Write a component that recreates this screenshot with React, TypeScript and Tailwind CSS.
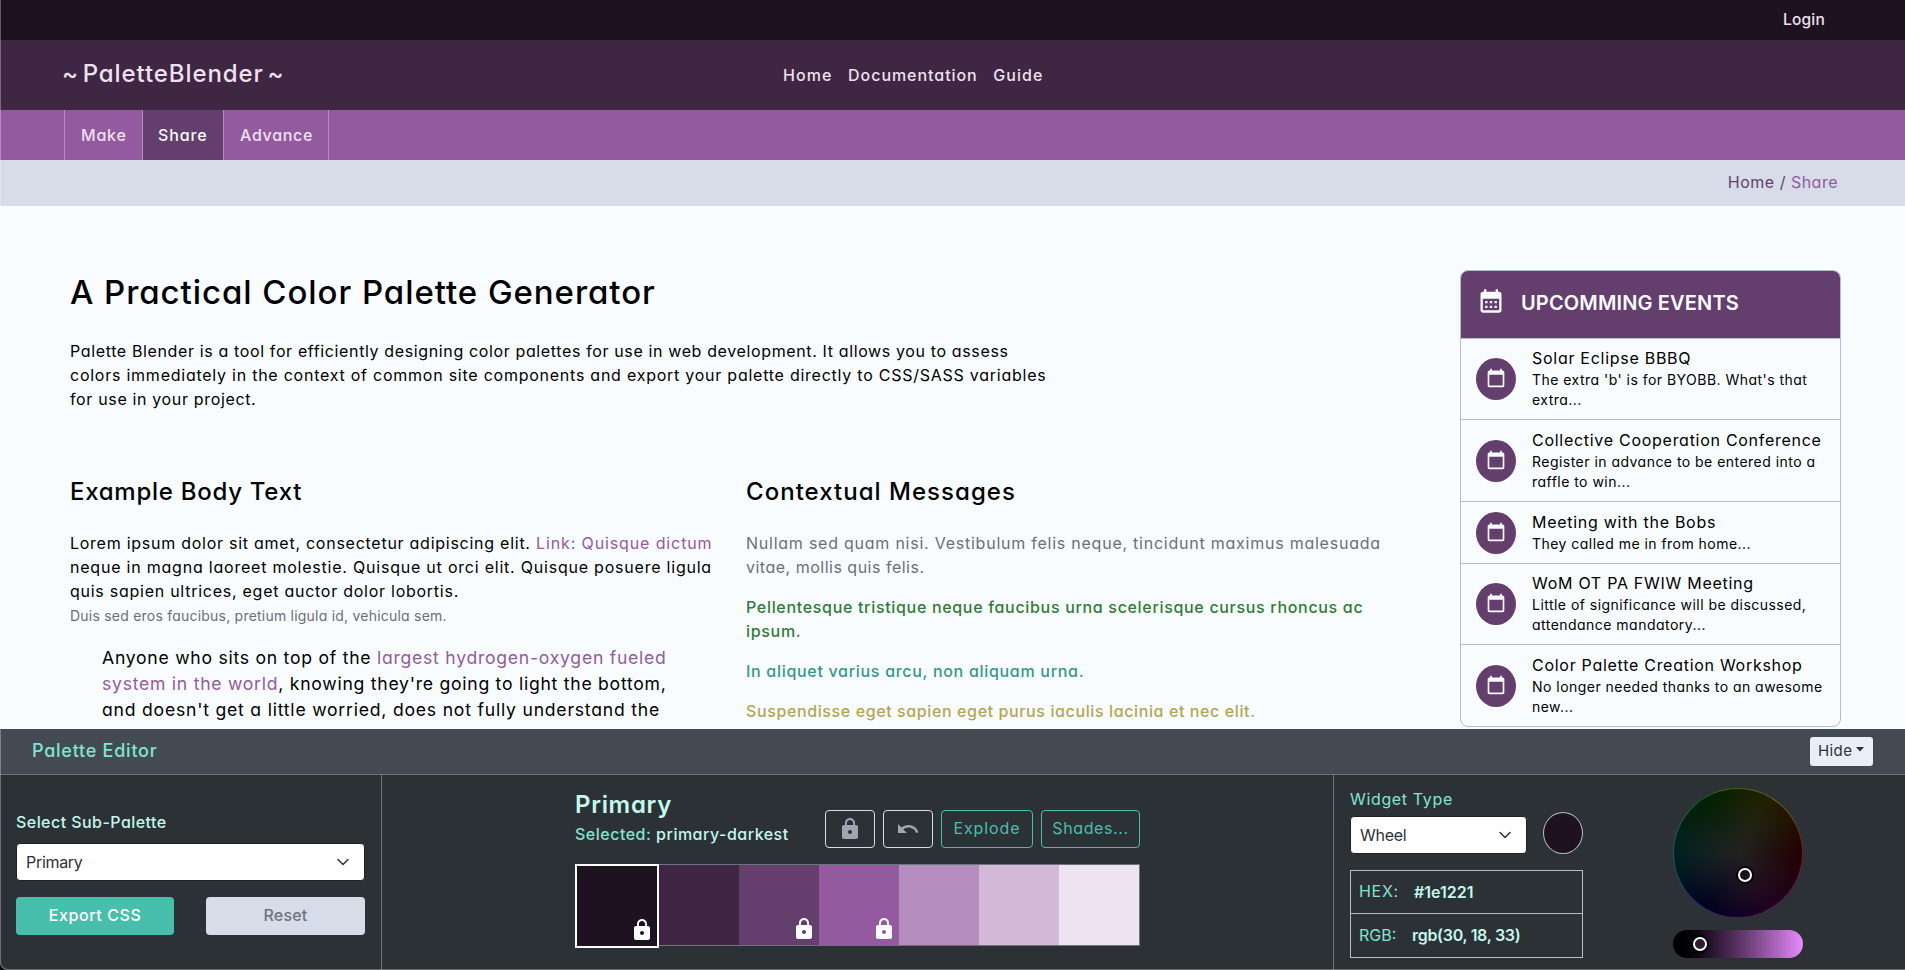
import React from "react";
import { MdCalendarMonth, MdCalendarToday, MdLock, MdUndo } from "react-icons/md";

type Event = { title: string; lines: string[]; height: string };

const events: Event[] = [
  { title: "Solar Eclipse BBBQ", lines: ["The extra 'b' is for BYOBB. What's that", "extra..."], height: "h-[81px]" },
  { title: "Collective Cooperation Conference", lines: ["Register in advance to be entered into a", "raffle to win..."], height: "h-[82px]" },
  { title: "Meeting with the Bobs", lines: ["They called me in from home..."], height: "h-[62px]" },
  { title: "WoM OT PA FWIW Meeting", lines: ["Little of significance will be discussed,", "attendance mandatory..."], height: "h-[81px]" },
  { title: "Color Palette Creation Workshop", lines: ["No longer needed thanks to an awesome", "new..."], height: "h-[81px]" },
];

const swatches = [
  { color: "bg-[#3f2642]", locked: false },
  { color: "bg-[#643e6d]", locked: true },
  { color: "bg-[#935a9f]", locked: true },
  { color: "bg-[#b58dbf]", locked: false },
  { color: "bg-[#d3b9d8]", locked: false },
  { color: "bg-[#eee3f0]", locked: false },
];

function Chevron() {
  return (
    <svg width="16" height="16" viewBox="0 0 16 16" fill="none" stroke="#343a40" strokeWidth="1.6" strokeLinecap="round" strokeLinejoin="round">
      <path d="m3 5.5 5 5 5-5" />
    </svg>
  );
}

function Select({ value, className }: { value: string; className: string }) {
  return (
    <button className={`flex h-[38px] items-center justify-between rounded border border-[#1d2124] bg-white pr-[13px] pl-[9px] text-[16px] tracking-[-0.3px] text-[#2c3135] [font-feature-settings:normal] ${className}`}>
      {value}
      <Chevron />
    </button>
  );
}

function Handle({ className, fill }: { className: string; fill: string }) {
  return (
    <svg className={`absolute size-[18px] ${className}`} viewBox="0 0 18 18">
      <circle cx="9" cy="9" r="9" fill="#000" />
      <circle cx="9" cy="9" r="6" fill={fill} stroke="#fff" strokeWidth="2" />
    </svg>
  );
}

function SiteHeader() {
  return (
    <header>
      <div className="flex h-10 items-center justify-end bg-[#1e1221] pr-[80px] text-[15.5px] font-medium tracking-[0.2px] text-[#eee1f0]">
        <a>Login</a>
      </div>
      <div className="flex h-[70px] items-center bg-[#3f2642] text-[#eee1f0]">
        <div className="w-[783px] pb-0.5 pl-[62px] text-[24px] leading-8 font-medium tracking-[0.9px] [word-spacing:-3.5px]">~ PaletteBlender ~</div>
        <nav className="flex gap-[15.5px] font-medium">
          <a className="tracking-[1.1px]">Home</a>
          <a className="tracking-[0.95px]">Documentation</a>
          <a className="tracking-[1.1px]">Guide</a>
        </nav>
      </div>
      <nav className="flex h-[50px] bg-[#935a9f] pl-[64px] font-medium text-[#eee1f0]">
        <a className="flex w-[78px] items-center border-l border-[#b58dbf] pl-4 tracking-[0.8px]">Make</a>
        <a className="flex w-[81px] items-center border-l border-[#b58dbf] bg-[#643e6d] pl-[15px] tracking-[0.9px] text-[#f9fcff]">Share</a>
        <a className="flex w-[106px] items-center border-x border-[#b58dbf] pl-4 tracking-[0.7px]">Advance</a>
      </nav>
      <div className="flex h-[46px] items-center justify-end bg-[#d6dce8] pr-[67px] pb-0.5 tracking-[0.5px] whitespace-pre text-[#643e6d]">
        Home / <span className="text-[#935a9f]">Share</span>
      </div>
    </header>
  );
}

function Article() {
  return (
    <article className="w-[1460px] shrink-0 pt-[66px] pl-[70px] whitespace-nowrap">
      <h1 className="text-[33px] leading-10 font-medium tracking-[0.94px]">A Practical Color Palette Generator</h1>
      <p className="mt-[27px]">
        <span className="block tracking-[0.63px]">Palette Blender is a tool for efficiently designing color palettes for use in web development. It allows you to assess</span>
        <span className="block tracking-[0.755px]">colors immediately in the context of common site components and export your palette directly to CSS/SASS variables</span>
        <span className="block tracking-[0.65px]">for use in your project.</span>
      </p>
      <div className="mt-[65px] flex">
        <section className="w-[676px]">
          <h2 className="text-[24px] leading-8 font-medium tracking-[0.73px]">Example Body Text</h2>
          <p className="mt-[23px] tracking-[0.78px]">
            <span className="tracking-[0.74px]">Lorem ipsum dolor sit amet, consectetur adipiscing elit.</span>{" "}
            <a className="tracking-[0.88px] text-[#935a9f]">Link: Quisque dictum</a>
            <br />
            neque in magna laoreet molestie. Quisque ut orci elit. Quisque posuere ligula
            <br />
            <span className="tracking-[0.74px]">quis sapien ultrices, eget auctor dolor lobortis.</span>
          </p>
          <p className="mt-px text-[14px] leading-6 tracking-[0.22px] text-[#6c6f76]">Duis sed eros faucibus, pretium ligula id, vehicula sem.</p>
          <blockquote className="mt-[17px] pl-8 text-[17.6px] leading-[26px] tracking-[0.74px]">
            Anyone who sits on top of the <a className="text-[#935a9f]">largest hydrogen-oxygen fueled</a>
            <br />
            <a className="text-[#935a9f]">system in the world</a>, knowing they're going to light the bottom,
            <br />
            <span className="tracking-[0.78px]">and doesn't get a little worried, does not fully understand the</span>
          </blockquote>
        </section>
        <section>
          <h2 className="text-[24px] leading-8 font-medium tracking-[1.03px]">Contextual Messages</h2>
          <div className="mt-[23px] flex flex-col gap-4 font-medium">
            <p className="font-normal tracking-[0.76px] text-[#6c6f76]">
              Nullam sed quam nisi. Vestibulum felis neque, tincidunt maximus malesuada
              <br />
              <span className="tracking-[0.5px]">vitae, mollis quis felis.</span>
            </p>
            <p className="tracking-[0.68px] text-[#327a38]">
              Pellentesque tristique neque faucibus urna scelerisque cursus rhoncus ac
              <br />
              ipsum.
            </p>
            <p className="tracking-[0.7px] text-[#34988a]">In aliquet varius arcu, non aliquam urna.</p>
            <p className="tracking-[0.61px] text-[#b0a84f]">Suspendisse eget sapien eget purus iaculis lacinia et nec elit.</p>
          </div>
        </section>
      </div>
    </article>
  );
}

function Events() {
  return (
    <aside className="mt-16 h-[457px] w-[381px] shrink-0 overflow-hidden rounded-lg border border-[#b3bfcc] whitespace-nowrap">
      <div className="flex h-[68px] items-center border-b border-[#b3bfcc] bg-[#643e6d] pb-[7px] pl-4 text-[#f9fcff]">
        <MdCalendarMonth size={28} />
        <h3 className="ml-[16px] pt-[3px] text-[20px] font-semibold tracking-[0.15px]">UPCOMMING EVENTS</h3>
      </div>
      {events.map((e) => (
        <div key={e.title} className={`flex items-center border-b border-[#b3bfcc] pl-[15px] last:border-b-0 ${e.height}`}>
          <span className="flex h-[42px] w-10 items-center justify-center rounded-[50%] bg-[#643e6d] pb-0.5 text-[#f9fcff]">
            <MdCalendarToday size={20} />
          </span>
          <div className="ml-4 pb-px">
            <div className="leading-[23px] tracking-[0.72px]">{e.title}</div>
            {e.lines.map((line) => (
              <div key={line} className="text-[14px] leading-5 tracking-[0.47px]">{line}</div>
            ))}
          </div>
        </div>
      ))}
    </aside>
  );
}

function SubPalettePanel() {
  return (
    <div className="w-[382px] border-r border-[#6c7275] pt-[35px] pl-4">
      <div className="font-medium tracking-[0.45px] text-[#c4f8ec]">Select Sub-Palette</div>
      <Select value="Primary" className="mt-[9px] w-[349px]" />
      <div className="mt-4 flex gap-8 font-medium">
        <button className="h-[38px] w-[158px] rounded bg-[#48bfad] pb-0.5 tracking-[0.6px] text-white">Export CSS</button>
        <button className="h-[38px] w-[159px] rounded bg-[#d6dce8] pb-0.5 tracking-[0.2px] text-[#6c757d]">Reset</button>
      </div>
    </div>
  );
}

function ShadesPanel() {
  return (
    <div className="flex w-[951px] flex-col pl-[193px]">
      <div className="flex h-[73px] w-[565px] items-end justify-between pt-[14px]">
        <div className="self-start whitespace-nowrap text-[#c4f8ec]">
          <h2 className="text-[24px] leading-8 font-semibold tracking-[0.7px]">Primary</h2>
          <div className="mt-px leading-6 font-medium tracking-[0.5px]">
            <span className="text-[#7fe5d1]">Selected:</span> primary-darkest
          </div>
        </div>
        <div className="flex gap-2 text-[#48bfad]">
          <button className="flex h-[38px] w-[50px] items-center justify-center rounded border border-[#d6dce8] text-[#a0a6b1]"><MdLock size={24} /></button>
          <button className="flex h-[38px] w-[50px] items-center justify-center rounded border border-[#d6dce8] text-[#a0a6b1]"><MdUndo size={24} /></button>
          <button className="h-[38px] w-[92px] rounded border border-[#48bfad] pb-0.5 tracking-[0.9px]">Explode</button>
          <button className="h-[38px] w-[99px] rounded border border-[#48bfad] pb-0.5 tracking-[0.6px]">Shades...</button>
        </div>
      </div>
      <div className="mt-4 flex h-[82px] w-[565px] border border-[#6c757d] text-[#f9fcff]">
        <div className="-mt-px -ml-px flex size-[84px] shrink-0 items-end justify-end border-2 border-white bg-[#1e1221] pr-[3px] pb-1">
          <MdLock size={24} />
        </div>
        {swatches.map((s) => (
          <div key={s.color} className={`flex size-20 shrink-0 items-end justify-end pr-[3px] pb-1 ${s.color}`}>
            {s.locked && <MdLock size={24} />}
          </div>
        ))}
      </div>
    </div>
  );
}

function WidgetPanel() {
  return (
    <div className="flex flex-1 border-l border-[#6c7275] pl-4">
      <div className="w-[233px] pt-3">
        <div className="tracking-[0.65px] text-[#7fe5d1]">Widget Type</div>
        <div className="mt-[1px] flex h-[42px] items-center justify-between">
          <Select value="Wheel" className="mt-[3px] w-[177px]" />
          <span className="h-[42px] w-10 rounded-[50%] border border-[#b3bfcc] bg-[#1e1221]" />
        </div>
        <div className="mt-4 border border-[#b3bfcc] text-[#c4f8ec]">
          <div className="flex h-[43px] items-center border-b border-[#b3bfcc] pb-0.5 pl-2">
            <span className="w-[55px] tracking-[0.7px] text-[#7fe5d1]">HEX:</span>
            <span className="pt-0.5 font-semibold [font-feature-settings:normal]">#1e1221</span>
          </div>
          <div className="flex h-[43px] items-center pb-px pl-2">
            <span className="w-[53px] text-[#7fe5d1]">RGB:</span>
            <span className="font-semibold tracking-[-0.3px] [font-feature-settings:normal]">rgb(30, 18, 33)</span>
          </div>
        </div>
      </div>
      <div className="ml-[90px] pt-[13px]">
        <div className="relative size-[130px] rounded-full bg-[conic-gradient(from_90deg,#6e1a1a,#5a1a66,#22226e,#1a5a66,#1f5e1f,#66661a,#6e1a1a)] p-px">
          <div className="size-32 rounded-full bg-[radial-gradient(closest-side,#212121,#21212100),conic-gradient(from_90deg,#210000,#210021,#000021,#002121,#002100,#212100,#210000)]" />
          <Handle className="top-[78px] left-[63px]" fill="#1e1221" />
        </div>
        <div className="relative mt-3 h-7 w-[130px] rounded-full bg-linear-to-r from-black to-[#e88bff]">
          <Handle className="top-[5px] left-[18px]" fill="#2e1a33" />
        </div>
      </div>
    </div>
  );
}

function Editor() {
  return (
    <section className="flex h-[241px] flex-col bg-[#2c3135]">
      <div className="flex h-[46px] shrink-0 items-center justify-between border-b border-[#6c7275] bg-[#434a51] pr-8 pl-8">
        <h2 className="pb-0.5 text-[18px] font-medium tracking-[0.75px] text-[#7fe5d1]">Palette Editor</h2>
        <button className="flex h-[29px] w-[63px] items-center gap-1 rounded-[3px] bg-[#e9eff7] pb-0.5 pl-2 text-[15px] tracking-[0.4px] text-[#2c3135]">
          Hide
          <svg className="mb-0.5" width="8" height="5" viewBox="0 0 8 5"><path d="M0 0h8L4 4.5z" fill="#2c3135" /></svg>
        </button>
      </div>
      <div className="flex flex-1">
        <SubPalettePanel />
        <ShadesPanel />
        <WidgetPanel />
      </div>
    </section>
  );
}

export default function App() {
  return (
    <div className="bg-black">
      <div className="relative flex h-[970px] w-[1905px] flex-col overflow-hidden rounded-bl-lg bg-[#f9fcff] font-[Inter,sans-serif] text-[16px] leading-6 text-black [font-feature-settings:'cv11']">
        <SiteHeader />
        <main className="flex h-[523px] shrink-0 overflow-hidden">
          <Article />
          <Events />
        </main>
        <Editor />
        <div className="pointer-events-none absolute inset-0 rounded-bl-lg border-b border-l border-white/30" />
      </div>
    </div>
  );
}
